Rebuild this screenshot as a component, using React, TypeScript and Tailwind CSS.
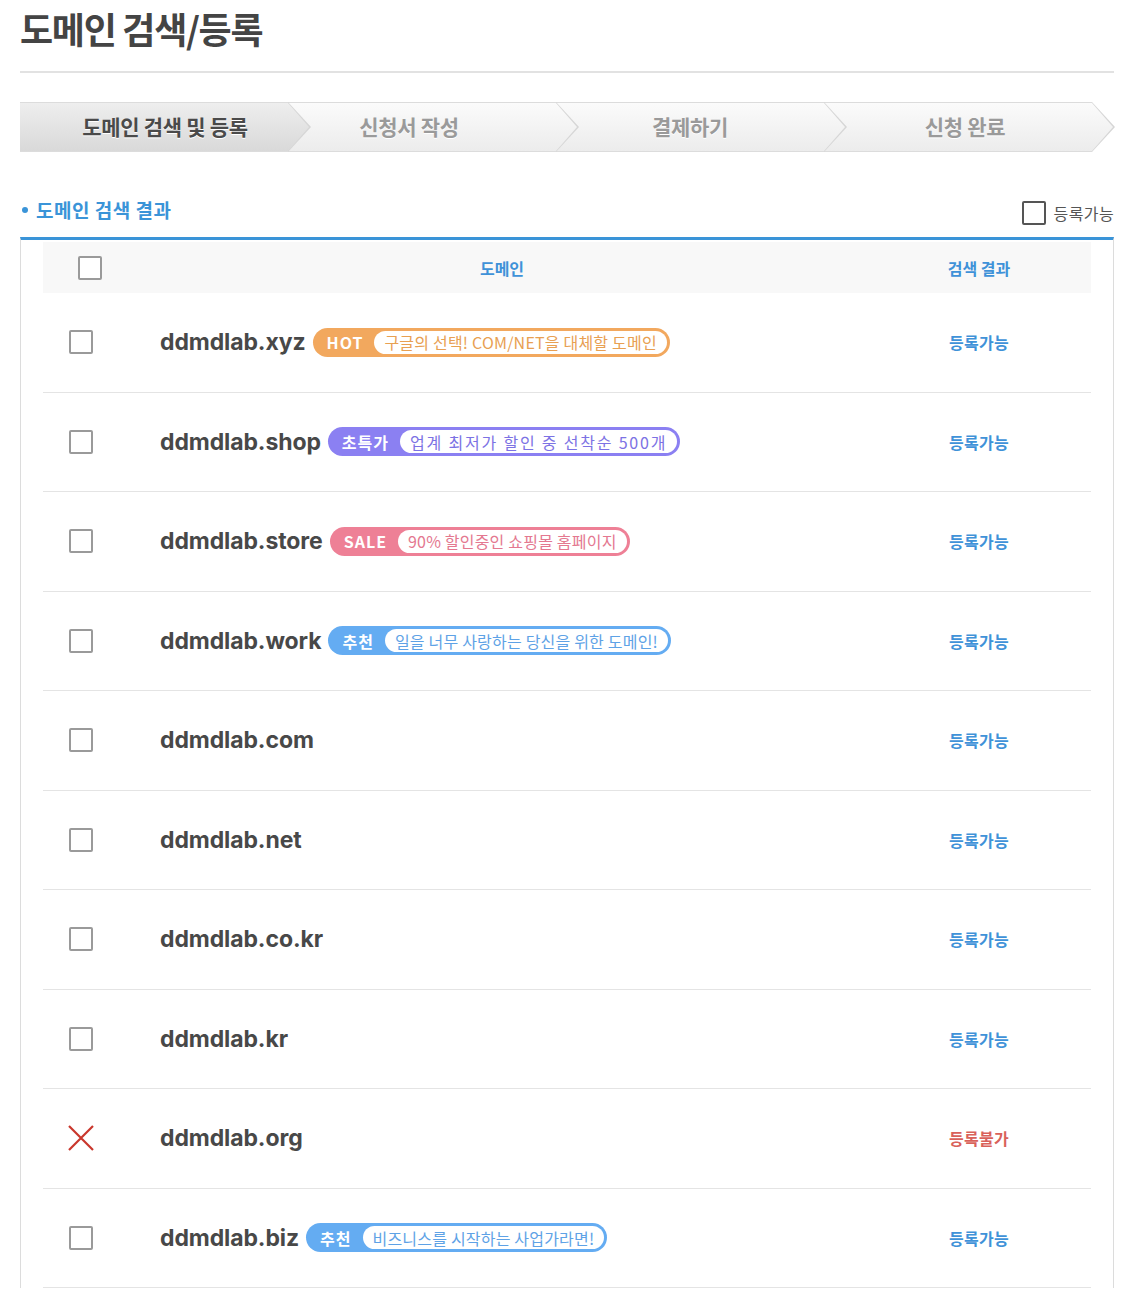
import React from 'react';

type Badge = {
  label: string;
  text: string;
  tone: 'orange' | 'purple' | 'pink' | 'blue';
  wide?: boolean;
};

type DomainRow = {
  name: string;
  available: boolean;
  badge?: Badge;
};

const STEPS = [
  { label: '도메인 검색 및 등록', active: true, pad: 'pl-[22px]', z: 'z-40' },
  { label: '신청서 작성', active: false, pad: 'pr-[26px]', z: 'z-30' },
  { label: '결제하기', active: false, pad: '', z: 'z-20' },
  { label: '신청 완료', active: false, pad: 'pl-[14px]', z: 'z-10' },
];

const ROWS: DomainRow[] = [
  { name: 'ddmdlab.xyz', available: true, badge: { label: 'HOT', text: '구글의 선택! COM/NET을 대체할 도메인', tone: 'orange' } },
  { name: 'ddmdlab.shop', available: true, badge: { label: '초특가', text: '업계 최저가 할인 중 선착순 500개', tone: 'purple', wide: true } },
  { name: 'ddmdlab.store', available: true, badge: { label: 'SALE', text: '90% 할인중인 쇼핑몰 홈페이지', tone: 'pink' } },
  { name: 'ddmdlab.work', available: true, badge: { label: '추천', text: '일을 너무 사랑하는 당신을 위한 도메인!', tone: 'blue' } },
  { name: 'ddmdlab.com', available: true },
  { name: 'ddmdlab.net', available: true },
  { name: 'ddmdlab.co.kr', available: true },
  { name: 'ddmdlab.kr', available: true },
  { name: 'ddmdlab.org', available: false },
  { name: 'ddmdlab.biz', available: true, badge: { label: '추천', text: '비즈니스를 시작하는 사업가라면!', tone: 'blue' } },
];

const TONES = {
  orange: { bg: 'bg-[#f2a85e]', text: 'text-[#e8a052]' },
  purple: { bg: 'bg-[#8b80f2]', text: 'text-[#7c72e4]' },
  pink: { bg: 'bg-[#ee8096]', text: 'text-[#e47890]' },
  blue: { bg: 'bg-[#64acf2]', text: 'text-[#5ea2e6]' },
};

function Checkbox({ dark = false }: { dark?: boolean }) {
  return (
    <span
      className={`inline-block h-[24px] w-[24px] rounded-[2px] border-2 bg-white ${
        dark ? 'border-[#555]' : 'border-[#9a9a9a]'
      }`}
    />
  );
}

function BadgePill({ badge }: { badge: Badge }) {
  const tone = TONES[badge.tone];
  return (
    <span className={`ml-[7px] inline-flex h-[29px] items-center rounded-full p-[3px] ${tone.bg}`}>
      <span className="px-[11px] text-[16px] font-bold leading-none tracking-[1px] text-white">{badge.label}</span>
      <span
        className={`flex h-full items-center rounded-full bg-white px-[10px] text-[16px] leading-none ${
          badge.wide ? 'tracking-[1.8px]' : 'tracking-[0.2px]'
        } ${tone.text}`}
      >
        {badge.text}
      </span>
    </span>
  );
}

function StepItem({ step }: { step: (typeof STEPS)[number] }) {
  const fill = step.active
    ? 'bg-gradient-to-b from-[#eeeeee] to-[#d9d9d9]'
    : 'bg-gradient-to-b from-[#fbfbfb] to-[#ececec]';
  return (
    <div
      className={`relative flex h-[50px] w-[268px] items-center justify-center border-y border-[#dcdcdc] ${fill} ${step.z} ${step.pad}`}
    >
      {/* 화살표 */}
      <span className="absolute left-full top-[-1px] h-[50px] w-[23px] bg-[#d6d6d6] [clip-path:polygon(0_0,100%_50%,0_100%)]" />
      <span
        className={`absolute left-full top-0 h-[48px] w-[21px] [clip-path:polygon(0_0,100%_50%,0_100%)] ${fill}`}
      />
      <span
        className={`text-[21px] font-bold tracking-[-0.3px] [text-shadow:0_1px_0_#fff] ${
          step.active ? 'text-[#4a4a4a]' : 'text-[#9a9a9a]'
        }`}
      >
        {step.label}
      </span>
    </div>
  );
}

function Row({ row }: { row: DomainRow }) {
  return (
    <div className="flex h-[99.5px] items-center border-b border-[#e4e4e4]">
      <div className="flex w-[76px] justify-center">
        {row.available ? (
          <Checkbox />
        ) : (
          <svg width="26" height="26" viewBox="0 0 26 26">
            <path d="M1 1 L25 25 M25 1 L1 25" stroke="#c9372c" strokeWidth="2.2" />
          </svg>
        )}
      </div>
      <div className="flex flex-1 items-center pl-[41px]">
        <span className="font-['Inter'] text-[23px] font-bold tracking-[-0.1px] text-[#484848]">{row.name}</span>
        {row.badge && <BadgePill badge={row.badge} />}
      </div>
      <div
        className={`w-[224px] text-center text-[16px] font-bold tracking-[0.3px] ${
          row.available ? 'text-[#3f92d8]' : 'text-[#d9615a]'
        }`}
      >
        {row.available ? '등록가능' : '등록불가'}
      </div>
    </div>
  );
}

export default function App() {
  return (
    <div className="min-h-screen bg-white px-[20px] font-['Noto_Sans_CJK_KR','Noto_Sans',sans-serif]">
      <h1 className="h-[73px] border-b-2 border-[#e2e2e2] text-[36px] font-bold leading-[56px] tracking-[-1.3px] text-[#444]">
        도메인 검색/등록
      </h1>

      <div className="mt-[29px] flex">
        {STEPS.map((step) => (
          <StepItem key={step.label} step={step} />
        ))}
      </div>

      <div className="mt-[44px] flex h-[28px] items-center justify-between">
        <h2 className="flex items-center text-[19px] font-bold tracking-[0.5px] text-[#3a94d8]">
          <span className="mr-[8px] ml-[2px] inline-block h-[6px] w-[6px] rounded-full bg-[#3a94d8]" />
          도메인 검색 결과
        </h2>
        <label className="mt-[6px] flex items-center gap-[8px] text-[16px] tracking-[0.4px] text-[#555]">
          <Checkbox dark />
          등록가능
        </label>
      </div>

      <div className="mt-[13px] border-x border-t-[3px] border-x-[#dcdcdc] border-t-[#3a94d8] px-[22px]">
        <div className="mt-[2px] flex h-[51px] items-center bg-[#f8f8f8]">
          <div className="flex w-[94px] justify-center">
            <Checkbox />
          </div>
          <div className="flex-1 text-center text-[16px] font-bold text-[#3f92d8]">도메인</div>
          <div className="w-[224px] text-center text-[16px] font-bold text-[#3f92d8]">검색 결과</div>
        </div>
        {ROWS.map((row) => (
          <Row key={row.name} row={row} />
        ))}
      </div>
    </div>
  );
}
